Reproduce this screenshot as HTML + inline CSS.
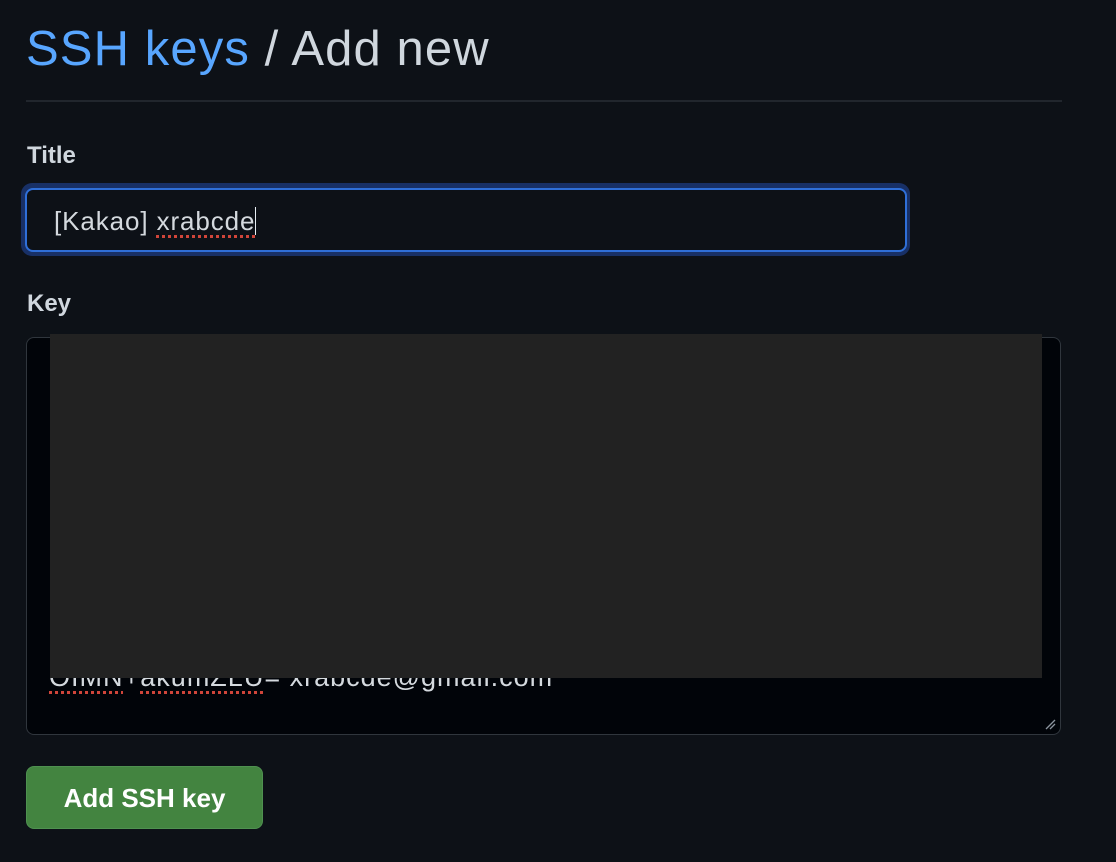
<!DOCTYPE html>
<html><head><style>
html,body{margin:0;padding:0;background:#0d1117;width:1116px;height:862px;overflow:hidden;font-family:"Liberation Sans",sans-serif;}
.h{position:absolute;left:26px;top:21px;font-size:49px;color:#d0d7de;white-space:nowrap;letter-spacing:1.1px;line-height:56px}
.h a{color:#58a6ff}
.hr{position:absolute;left:26px;top:100px;width:1036px;height:2px;background:#21262d}
.lbl{position:absolute;left:27px;font-size:24px;font-weight:bold;color:#d0d7de}
.ring{position:absolute;left:21px;top:183px;width:889px;height:73px;border-radius:11px;background:#183066}
.inp{position:absolute;left:25px;top:188px;width:878px;height:60px;border:2px solid #2f6fd8;border-radius:8px;background:#0d1117;box-sizing:content-box}
.inp > span{position:absolute;left:27px;top:16px;font-size:26px;letter-spacing:0.9px;color:#d4d9de;white-space:nowrap}
.sq{text-decoration:underline dotted #d0453a;text-decoration-thickness:3px;text-underline-offset:5px}
.ta{position:absolute;left:26px;top:337px;width:1033px;height:396px;border:1px solid #30363d;border-radius:8px;background:#010409;overflow:hidden}
.ta > span{position:absolute;left:22px;top:324px;font-size:27px;letter-spacing:1px;color:#d4d9de;white-space:nowrap}
.gray{position:absolute;left:50px;top:334px;width:992px;height:344px;background:#222222}
.btn{position:absolute;left:26px;top:766px;width:235px;height:61px;border:1px solid #4f9150;border-radius:8px;background:#438440;color:#fff;font-weight:bold;font-size:26px;text-align:center;line-height:62px}
</style></head><body>
<div class="h"><a>SSH keys</a> / Add new</div>
<div class="hr"></div>
<div class="lbl" style="top:142px">Title</div>
<div class="ring"></div>
<div class="inp"><span>[Kakao] <span class="sq">xrabcde</span><span style="display:inline-block;width:1px;height:28px;background:#e6edf3;vertical-align:-5px"></span></span></div>
<div class="lbl" style="top:290px">Key</div>
<div class="ta"><span><span class="sq">OIMN</span>+<span class="sq">akumZLU</span>= xrabcde@gmail.com</span>
<svg style="position:absolute;right:4px;bottom:4px" width="12" height="12"><path d="M2 11L11 2M6 11L11 6" stroke="#8b949e" stroke-width="1.3"/></svg></div>
<div class="gray"></div>
<div class="btn">Add SSH key</div>
</body></html>
